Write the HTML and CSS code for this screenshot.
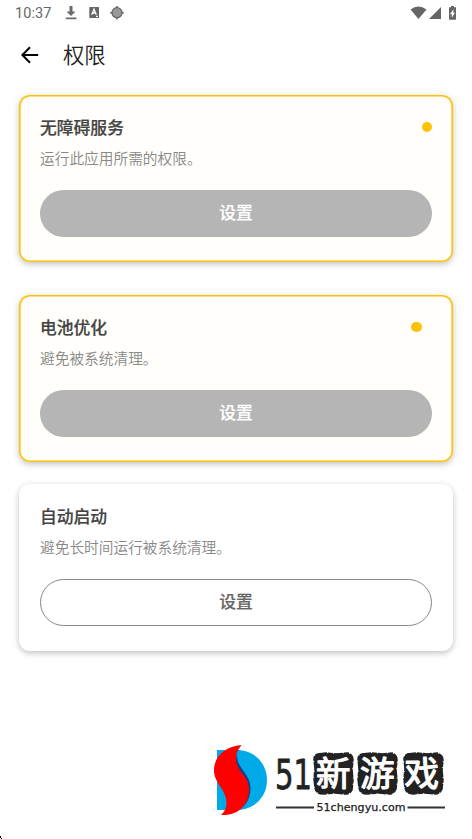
FILE: index.html
```html
<!DOCTYPE html>
<html lang="zh-CN">
<head>
<meta charset="utf-8">
<title>权限</title>
<link rel="stylesheet" href="styles.css">
</head>
<body>
<div class="screen">
  <header class="status">
    <span class="clock">10:37</span>
    <svg class="status-left" width="60" height="16" viewBox="0 0 60 16">
      <path fill="#6b6b6b" d="M4.500 0h3v5.500h3L6 10 1.500 5.500h3zM.8 11.500h10.600v1.700H.8z"/>
      <path fill="#666" d="M25 1h8.500q.5 0 .5.500v10q0 .5-.5.500H25q-.7 0-.7-.5v-10Q24.300 1 25 1z"/>
      <path fill="none" stroke="#fff" stroke-width="1.300" d="M26.700 8.800 29 3.200l2.300 5.600M27.500 7h3M31 10.400h2"/>
      <circle cx="52" cy="6.700" r="5" fill="#999" stroke="#666" stroke-width="1.300"/>
      <path stroke="#666" stroke-width="1.600" d="M52 0v2M52 11.400v2M45.200 6.700h2M56.800 6.700h2"/>
    </svg>
    <svg class="status-right" width="50" height="16" viewBox="0 0 50 16">
      <path fill="#666" d="M.5 3.500Q8.500-2.500 16.500 3.500L8.500 13z"/>
      <path fill="#666" d="M31 1v12H19z"/>
      <path fill="#666" d="M41 -.5h3v1.800h2V13q0 .7-.7.700h-5.600q-.7 0-.7-.7V1.300h2z"/>
      <path fill="#fff" d="M43.400 3.200v3.600h1.700l-3.300 5V8.300H40z"/>
    </svg>
  </header>
  <nav class="appbar">
    <svg width="18" height="18" viewBox="0 0 18 18"><path fill="none" stroke="#000" stroke-width="2" d="M17.200 9H2M9 1.300 1.400 9 9 16.700"/></svg>
    <h1>权限</h1>
  </nav>
  <main>
    <section class="card pending">
      <div class="row"><h2>无障碍服务</h2><i class="dot"></i></div>
      <p>运行此应用所需的权限。</p>
      <button>设置</button>
    </section>
    <section class="card pending battery">
      <div class="row"><h2>电池优化</h2><i class="dot"></i></div>
      <p>避免被系统清理。</p>
      <button>设置</button>
    </section>
    <section class="card startup">
      <div class="row"><h2>自动启动</h2></div>
      <p>避免长时间运行被系统清理。</p>
      <button>设置</button>
    </section>
  </main>
  <svg class="brand" width="240" height="84" viewBox="210 738 240 84">
    <path fill="#00a9e8" d="M217 750h20c17 0 30 13 30 30s-13 30-30 30h-20z"/>
    <path fill="#123f86" d="M241.500 745c-6 6-5 15-2 20 4 7 11 13 11 23 0 11-5 18-12 22-4-20-8-50 3-65z"/>
    <path fill="#f00" d="M241.500 745C225 746 214 757 214 770c0 14 12.500 19 12.500 33 0 5-2 9-5.500 12 18 1 28-11 28-25 0-12-7-15-11-23-3.500-7-2.500-16 3.500-22z"/>
    <text class="number" x="275" y="789" textLength="37" lengthAdjust="spacingAndGlyphs">51</text>
    <g fill="#222" stroke="#222" stroke-width="1.500" stroke-dasharray="9 1 5 1">
      <path d="M318 754l8-1 10 1 12-1q5 2 5 7l-1 10 1 10-1 10q-2 4-7 4l-10-1-12 1q-7 0-8-6l-1-9 1-10-1-10q0-4 4-5z"/>
      <path d="M362 754l10-1 10 1 10-1q5 2 5 7l-1 10 1 10-1 9q-2 5-7 5l-10-1-12 1q-7 0-8-6l-1-9 1-10-1-10q0-4 4-5z"/>
      <path d="M407 754l10-1 10 1 10-1q6 2 6 7l-1 10 1 10-1 9q-2 5-7 5l-11-1-11 1q-7 0-8-6l-1-9 1-10-1-10q0-4 4-5z"/>
    </g>
    <g class="glyphs">
      <text x="316" y="786">新</text>
      <text x="360" y="786">游</text>
      <text x="404.500" y="786">戏</text>
    </g>
    <path stroke="#333" stroke-width="2" d="M276 807.500h38M407.500 807.500h37.500"/>
    <text class="site" x="316.500" y="811" textLength="89" lengthAdjust="spacingAndGlyphs">51chengyu.com</text>
  </svg>
  <svg class="corner" width="2" height="3" viewBox="0 0 2 3"><path d="M0 0h1v2H0zM1 2h1v1H1z"/></svg>
</div>
</body>
</html>
```
FILE: styles.css
```css
* { box-sizing: border-box; }
body { margin: 0; background: #fff; font-family: Roboto, "Noto Sans CJK SC", sans-serif; }
h1, h2, p { margin: 0; }
.screen { position: relative; width: 472px; height: 839px; overflow: hidden; background: #fff; }
.status { display: flex; height: 26px; padding: 6px 14.5px 0 15px; }
.clock { width: 50px; font-size: 14.5px; line-height: 15px; color: #666; letter-spacing: .1px; }
.status-right { margin-left: auto; margin-right: -2px; }
.appbar { display: flex; align-items: center; gap: 24px; height: 58px; padding-left: 21px; }
.appbar h1 { position: relative; top: .5px; font-size: 21.3px; line-height: 30px; font-weight: 350; color: #222; }
main { display: flex; flex-direction: column; padding: 11px 19px 0; }
.card { height: 167px; padding: 20px 21px; border-radius: 11px; background: #fff; box-shadow: 0 2px 6px rgba(0,0,0,.25); }
.pending { background: #fffefa; box-shadow: inset 0 0 0 1.6px #ffc107, 0 2px 6px rgba(0,0,0,.25); }
.battery { margin-top: 33px; }
.startup { margin-top: 22px; }
.row { display: flex; align-items: center; justify-content: space-between; height: 24px; }
.card h2 { font-size: 16.8px; line-height: 24px; font-weight: 500; color: #444; -webkit-text-stroke: .2px #444; }
.card .row h2 { position: relative; top: .5px; }
.dot { width: 10.5px; height: 10.5px; border-radius: 50%; background: #ffc107; }
.battery .dot { margin-right: 10.5px; }
.card p { margin-top: 10px; font-size: 14.7px; line-height: 21px; font-weight: 350; color: #888; }
.card button { display: block; width: 392px; height: 47px; margin: 20px 0 0; padding: 0; border: 0; border-radius: 24px; background: #b5b5b5; color: #fff; font: 500 16.8px/47px Roboto, "Noto Sans CJK SC", sans-serif; -webkit-text-stroke: .2px currentColor; }
.startup button { border: 1px solid #888; background: #fff; color: #666; line-height: 45px; }
.brand { position: absolute; left: 210px; top: 738px; }
.number { font: 40.5px "DejaVu Sans", sans-serif; fill: #222; stroke: #222; stroke-width: .8px; stroke-linejoin: round; }
.glyphs { font: 400 34.5px "Noto Sans CJK SC", sans-serif; fill: #fff; stroke: #fff; stroke-width: 1.2px; stroke-linejoin: round; }
.site { font: 11px "DejaVu Sans", sans-serif; fill: #222; stroke: #222; stroke-width: .25px; }
.corner { position: absolute; left: 0; top: 836px; }
```
